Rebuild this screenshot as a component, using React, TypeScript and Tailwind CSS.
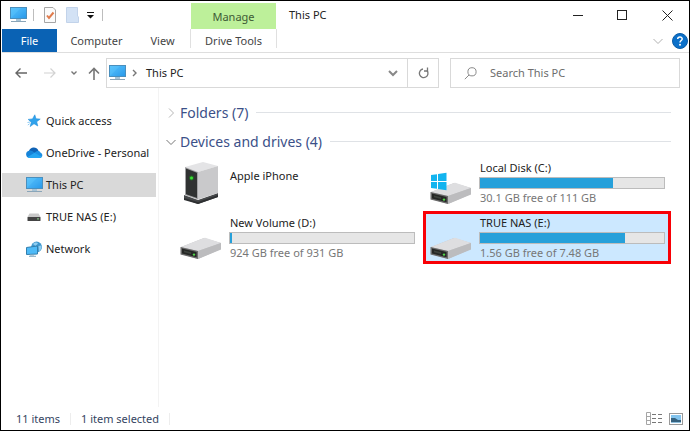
import React, { useState } from "react";
import clsx from "clsx";

type Drive = {
  name: string;
  kind: "tower" | "disk" | "system";
  detail?: string;
  used?: number;
};

const DRIVES: Drive[] = [
  { name: "Apple iPhone", kind: "tower" },
  { name: "Local Disk (C:)", kind: "system", detail: "30.1 GB free of 111 GB", used: 72.5 },
  { name: "New Volume (D:)", kind: "disk", detail: "924 GB free of 931 GB", used: 1 },
  { name: "TRUE NAS (E:)", kind: "disk", detail: "1.56 GB free of 7.48 GB", used: 79 },
];

function PcIcon() {
  return (
    <svg width="17" height="16" viewBox="0 0 17 16" className="shrink-0" aria-hidden="true">
      <defs>
        <linearGradient id="screen" x1="0" y1="0" x2="1" y2="1">
          <stop offset="0" stopColor="#5cc4fb" />
          <stop offset="0.5" stopColor="#4bb8f8" />
          <stop offset="1" stopColor="#2596e8" />
        </linearGradient>
      </defs>
      <rect x="0.5" y="0.5" width="16" height="11" fill="url(#screen)" stroke="#4a8fbd" />
      <path d="M1 11 L11 1 H16 V11 Z" fill="#2f9cea" opacity="0.3" />
      <path d="M6 12h5v2H6z" fill="#a8c4d6" />
      <path d="M1 14.5h15" stroke="#8aa5b8" />
    </svg>
  );
}

function StarIcon() {
  return (
    <svg width="14" height="14" viewBox="0 0 14 14" aria-hidden="true">
      <path d="M7.8 0.8 L9 4.8 L13.2 5.1 L9.7 7.8 L10.8 12 L7 9.7 L3.2 12.6 L4.3 8.2 L1.2 5.4 L5.5 4.9 Z" fill="#2fa2ec" stroke="#2790dc" strokeWidth="0.6" />
      <path d="M0.5 8.5 L3.2 8 M0.8 11 L2.6 9.8" stroke="#8ecbf3" />
    </svg>
  );
}

function CloudIcon() {
  return (
    <svg width="17" height="12" viewBox="0 0 17 12" className="shrink-0" aria-hidden="true">
      <path d="M3.2 3.6 A4.8 4.6 0 0 1 12.2 3.2 L13 5 L8 8 L2 6 Z" fill="#0f62b5" />
      <path d="M3 3.7 C5 3.3 6.6 4.3 8.4 5.6 L12 8.4 L3.6 11 A3.7 3.7 0 0 1 3 3.7 Z" fill="#1683d8" />
      <path d="M8.6 5.7 C10.6 3.3 13.9 3.6 14.6 5.7 C16.6 6.3 16.8 8.7 15.8 10 L11 8.8 Z" fill="#1c90e4" />
      <path d="M1.6 10 L8.6 5.7 L15.9 9.9 C15.2 10.8 14.4 11 13.6 11 H3.8 C2.8 11 2 10.6 1.6 10 Z" fill="#25a6f2" />
    </svg>
  );
}

function SmallDriveIcon() {
  return (
    <svg width="14" height="9" viewBox="0 0 14 9" aria-hidden="true">
      <path d="M2.5 0.5 H11.5 L13.5 4 H0.5 Z" fill="#c9c9c9" />
      <rect x="0.5" y="4" width="13" height="4" rx="0.5" fill="#444" />
      <rect x="10" y="5.4" width="2" height="1" fill="#8fd68f" />
    </svg>
  );
}

function NetworkIcon() {
  return (
    <svg width="17" height="16" viewBox="0 0 17 16" className="shrink-0" aria-hidden="true">
      <circle cx="10.6" cy="6" r="5.4" fill="#3f97cd" />
      <path d="M7 3 C9 0.8 11 1.2 12 2.4 L9.5 5 Z M12.5 5 L15.4 4.5 C16 7 15 9 13 10.4 Z" fill="#8fcdf0" />
      <path d="M0.5 6.5 L11.5 5 V13 L0.5 13.5 Z" fill="#4dbaf7" stroke="#327fae" />
      <path d="M4 14 H8 M3 15.3 H10" stroke="#7fa8c0" />
    </svg>
  );
}

function DiskIcon({ system = false }: { system?: boolean }) {
  return (
    <svg width="42" height="44" viewBox="0 -2 42 44" aria-hidden="true">
      <path d="M1 29 L24 20 L41 25 L41 31 L18 41 L1 36 Z" fill="#c4c4c6" />
      <path d="M1 29 L24 20 Q25 19.7 26 20 L41 25 L18 33 Z" fill="#dedee0" />
      <path d="M18 33 L41 25 V31.5 L18 41 Z" fill="#bcbcbe" />
      <path d="M0.5 29 L18 33 V41 L0.5 36.5 Z" fill="#6a6a6a" />
      <path d="M2 30.5 L16.6 34 V39.2 L2 35.5 Z" fill="#252725" />
      <path d="M4 32.5 L11 34.2 V36 L4 34.3 Z" fill="#3d423d" />
      <circle cx="14" cy="36.6" r="1.2" fill="#52d64a" />
      {system && (
        <g fill="#12b4ef">
          <path d="M1 12 L7 11.2 V18 H1 Z" />
          <path d="M8 11 L16.5 9.8 V18 H8 Z" />
          <path d="M1 19 H7 V25.8 L1 25 Z" />
          <path d="M8 19 H16.5 V27.2 L8 26 Z" />
        </g>
      )}
    </svg>
  );
}

function TowerIcon() {
  return (
    <svg width="42" height="44" viewBox="0 1 42 44" aria-hidden="true">
      <path d="M4 35 L18 40 L38 33 V37 L18 44 L4 39 Z" fill="#46484a" />
      <path d="M4 38 L18 42 L38 35 V37 L18 44 L4 40 Z" fill="#2e3032" />
      <path d="M5 7 L23 2 L38 6 L18 12 Z" fill="#e4e4e6" />
      <path d="M18 12 L38 6 V33 L18 39.5 Z" fill="#c9c9cb" />
      <path d="M5 7 L18 12 V39.5 L5 35 Z" fill="#a2a2a4" />
      <path d="M6 8.6 L17 12.8 V38 L6 34.2 Z" fill="#303232" />
      <circle cx="11.5" cy="18" r="2.4" fill="#206c20" />
      <circle cx="11.5" cy="18" r="1.5" fill="#3be036" />
    </svg>
  );
}

function Chevron({ dir, className }: { dir: "down" | "right"; className?: string }) {
  return (
    <svg width="10" height="10" viewBox="0 0 10 10" fill="none" stroke="currentColor" className={className} aria-hidden="true">
      <path d={dir === "down" ? "M0.5 3 L5 7.5 L9.5 3" : "M3 0.5 L7.5 5 L3 9.5"} />
    </svg>
  );
}

function TitleBar() {
  return (
    <header className="flex h-7 items-stretch">
      <div className="flex w-[189px] items-center pl-2">
        <PcIcon />
        <span className="ml-[6px] h-3 w-px bg-[#bdbdbd]" />
        <button aria-label="Properties" className="ml-[10px]">
          <svg width="12" height="16" viewBox="0 0 12 16" fill="none">
            <path d="M0.5 0.5 H9 L11.5 3 V15.5 H0.5 Z" fill="#fbfbfb" stroke="#a6a6a6" />
            <path d="M3 8.5 L5 11 L9.5 5.5" stroke="#e07b4c" strokeWidth="2" />
          </svg>
        </button>
        <button aria-label="New folder" className="ml-[10px]">
          <svg width="13" height="16" viewBox="0 0 13 16">
            <path d="M0.5 0.5 H11.5 V9 L12.5 10 V15.5 H0.5 Z" fill="#d3e2f5" stroke="#c2d3ea" />
          </svg>
        </button>
        <button aria-label="Customize Quick Access Toolbar" className="ml-2">
          <svg width="7" height="7" viewBox="0 0 7 7">
            <path d="M0 0 H7 V1 H0 Z M0 3 H7 L3.5 6.5 Z" fill="#111" />
          </svg>
        </button>
        <span className="ml-2 h-3 w-px bg-[#bdbdbd]" />
      </div>
      <div className="mt-[2px] flex w-[85px] items-center justify-center bg-[#bdf09a] pt-[2px] text-[#3d5a35]">Manage</div>
      <h1 className="ml-[13px] flex-1 self-center text-[#222]">This PC</h1>
      <div className="flex items-center text-[#222]">
        <button aria-label="Minimize" className="flex w-[44px] justify-center">
          <svg width="11" height="11" viewBox="0 0 11 11" stroke="currentColor"><path d="M0 5.5 H10" /></svg>
        </button>
        <button aria-label="Maximize" className="flex w-[45px] justify-center">
          <svg width="11" height="11" viewBox="0 0 11 11" stroke="currentColor" fill="none"><rect x="0.5" y="0.5" width="9" height="9" /></svg>
        </button>
        <button aria-label="Close" className="flex w-[44px] justify-center">
          <svg width="11" height="11" viewBox="0 0 11 11" stroke="currentColor"><path d="M0.5 0.5 L10.5 10.5 M10.5 0.5 L0.5 10.5" /></svg>
        </button>
      </div>
    </header>
  );
}

function Ribbon() {
  return (
    <div className="flex h-6 items-stretch border-b border-[#dedede] text-[#444]">
      <button className="w-[55px] bg-[#0a62b4] text-white">File</button>
      <button className="w-[79px]">Computer</button>
      <button className="w-[53px]">View</button>
      <button className="mb-1 ml-px w-[87px] border-x border-[#e0e0e0] pt-1">Drive Tools</button>
      <div className="flex flex-1 items-center justify-end pr-px">
        <button aria-label="Expand the Ribbon" className="text-[#b0b0b0]">
          <Chevron dir="down" />
        </button>
        <button aria-label="Help" className="ml-[9px]">
          <svg width="16" height="16" viewBox="0 0 16 16" fill="none">
            <circle cx="8" cy="8" r="7.5" fill="#0b70c9" stroke="#0b5ca6" />
            <path d="M5.7 6 C5.8 3.2 10.3 3.3 10.2 6 C10.1 7.5 8 7.7 8 9.6" stroke="#fff" strokeWidth="1.5" />
            <circle cx="8" cy="11.8" r="1" fill="#fff" />
          </svg>
        </button>
      </div>
    </div>
  );
}

function NavBar() {
  return (
    <div className="flex items-center pt-[5px] pr-[9px] pl-[13px]">
      <button aria-label="Back" className="text-[#666]">
        <svg width="12" height="12" viewBox="0 0 12 12" fill="none" stroke="currentColor" strokeWidth="1.4"><path d="M12 6 H1 M5.5 1.5 L1 6 L5.5 10.5" /></svg>
      </button>
      <button aria-label="Forward" disabled className="ml-[17px] text-[#d2d2d2]">
        <svg width="12" height="12" viewBox="0 0 12 12" fill="none" stroke="currentColor" strokeWidth="1.2"><path d="M0 6 H11 M6.5 1.5 L11 6 L6.5 10.5" /></svg>
      </button>
      <button aria-label="Recent locations" className="ml-[15px] text-[#777]">
        <svg width="6" height="6" viewBox="0 0 6 6" fill="none" stroke="currentColor" strokeWidth="1.4"><path d="M0.5 1.5 L3 4 L5.5 1.5" /></svg>
      </button>
      <button aria-label="Up" className="ml-[11px] text-[#777]">
        <svg width="12" height="13" viewBox="0 0 12 13" fill="none" stroke="currentColor" strokeWidth="1.6"><path d="M6 13 V1.5 M1 6.5 L6 1.5 L11 6.5" /></svg>
      </button>
      <div className="ml-[6px] flex h-[30px] min-w-0 flex-1 items-center border border-[#d9d9d9] pl-[2px]">
        <PcIcon />
        <svg width="5" height="8" viewBox="0 0 5 8" fill="none" stroke="#777" strokeWidth="1.4" className="ml-[6px]" aria-hidden="true"><path d="M1 1 L4 4 L1 7" /></svg>
        <a href="#this-pc" className="ml-[9px] flex-1 text-[#222]">This PC</a>
        <button aria-label="Previous locations" className="mr-[9px] text-[#888]">
          <svg width="10" height="8" viewBox="0 0 10 8" fill="none" stroke="currentColor" strokeWidth="2"><path d="M1 2 L5 6 L9 2" /></svg>
        </button>
        <button aria-label="Refresh" className="flex h-full w-[31px] items-center justify-center border-l border-[#d9d9d9] text-[#777]">
          <svg width="11" height="12" viewBox="0 0 11 12" fill="none" stroke="currentColor" strokeWidth="1.3">
            <path d="M9 3.5 A4.3 4.3 0 1 1 5 2" />
            <path d="M9.5 0.5 V4 H6" />
          </svg>
        </button>
      </div>
      <label className="ml-[11px] flex h-[30px] w-[230px] items-center border border-[#d9d9d9] pl-[13px]">
        <svg width="13" height="13" viewBox="0 0 13 13" fill="none" stroke="#8a8a8a" className="shrink-0" aria-hidden="true">
          <circle cx="8" cy="4.8" r="4.1" />
          <path d="M5 8 L0.8 12.2" />
        </svg>
        <input type="search" aria-label="Search This PC" placeholder="Search This PC" className="ml-[13px] min-w-0 flex-1 bg-transparent outline-none placeholder:text-[#6d6d6d]" />
      </label>
    </div>
  );
}

const PLACES = [
  { label: "Quick access", icon: <StarIcon /> },
  { label: "OneDrive - Personal", icon: <CloudIcon /> },
  { label: "This PC", icon: <PcIcon /> },
  { label: "TRUE NAS (E:)", icon: <SmallDriveIcon /> },
  { label: "Network", icon: <NetworkIcon /> },
];

function Sidebar() {
  return (
    <nav className="flex w-[157px] shrink-0 flex-col gap-2 border-r border-[#f3f3f3] pt-[21px] pr-[2px] text-[#222]">
      {PLACES.map((place) => (
        <a
          key={place.label}
          href="#place"
          className={clsx("flex h-6 items-center pl-6 whitespace-nowrap", place.label === "This PC" && "bg-[#d9d9d9]")}
        >
          <span className="flex w-4 shrink-0 justify-center">{place.icon}</span>
          <span className="ml-1">{place.label}</span>
        </a>
      ))}
    </nav>
  );
}

function GroupHeading({ title, open }: { title: string; open: boolean }) {
  return (
    <h2 className="flex h-[29px] items-center text-[14px] text-[#3b5088]">
      <button aria-expanded={open} className="flex items-center gap-1 whitespace-nowrap">
        <Chevron dir={open ? "down" : "right"} className={open ? "text-[#777]" : "text-[#b5b5b5]"} />
        {title}
      </button>
      <span className="ml-2 h-px flex-1 bg-[#dfe2e6]" />
    </h2>
  );
}

function DriveTile({ drive, selected, onSelect }: { drive: Drive; selected: boolean; onSelect: () => void }) {
  return (
    <button
      onClick={onSelect}
      aria-pressed={selected}
      className={clsx(
        "flex h-[53px] items-center border-[3px] pr-[3px] pl-1 text-left",
        selected ? "border-[#f80006] bg-[#cce8ff]" : "border-transparent"
      )}
    >
      <span className="w-[42px] shrink-0">
        {drive.kind === "tower" ? <TowerIcon /> : <DiskIcon system={drive.kind === "system"} />}
      </span>
      <span className="ml-[7px] block min-w-0 flex-1 leading-4 whitespace-nowrap">
        <span className={clsx("block pl-px text-[#222]", !drive.detail && "pb-[14px]")}>{drive.name}</span>
        {drive.detail && (
          <>
            <span className="my-px block h-3 border border-[#bcbcbc] bg-[#e6e6e6]">
              <span className="block h-full bg-[#26a0da]" style={{ width: `${drive.used}%` }} />
            </span>
            <span className="block pl-px text-[#777]">{drive.detail}</span>
          </>
        )}
      </span>
    </button>
  );
}

function StatusBar() {
  return (
    <footer className="flex h-[23px] items-center pr-[6px] pl-[14px] text-[#35445f]">
      <span>11 items</span>
      <span className="ml-[10px] h-3 w-px bg-[#ededed]" />
      <span className="ml-[10px]">1 item selected</span>
      <span className="ml-[10px] h-3 w-px bg-[#ededed]" />
      <button aria-label="Details view" className="ml-auto">
        <svg width="17" height="13" viewBox="0 0 17 13" fill="none">
          <path d="M0.5 0.5 H4.5 V12.5 H0.5 Z M0.5 4.5 H4.5 M0.5 8.5 H4.5" stroke="#a5a5a5" />
          <path d="M6 2.5 H10 M12 2.5 H16 M6 6.5 H10 M12 6.5 H16 M6 10.5 H10 M12 10.5 H16" stroke="#777" />
        </svg>
      </button>
      <button aria-label="Large icons view" className="ml-[6px]">
        <svg width="14" height="12" viewBox="0 0 14 12">
          <rect x="0.5" y="0.5" width="13" height="11" fill="#fff" stroke="#999" />
          <rect x="2" y="2" width="10" height="8" fill="#83c4ee" />
          <path d="M2 5 L6 5 L9 7 H12 V10 H2 Z" fill="#36627f" />
          <path d="M2 9 H12 V10 H2 Z" fill="#8ebfdd" />
        </svg>
      </button>
    </footer>
  );
}

export default function App() {
  const [selected, setSelected] = useState("TRUE NAS (E:)");

  return (
    <div className="flex min-h-screen flex-col border border-black bg-white pl-px font-['Noto_Sans','Open_Sans',sans-serif] text-[11px] leading-4">
      <TitleBar />
      <Ribbon />
      <NavBar />
      <div className="flex flex-1">
        <Sidebar />
        <main className="min-w-0 flex-1 pt-[10px] pr-[18px] pl-[7px]">
          <GroupHeading title="Folders (7)" open={false} />
          <GroupHeading title="Devices and drives (4)" open />
          <div className="ml-[7px] grid grid-cols-2 gap-[2px]">
            {DRIVES.map((drive) => (
              <DriveTile
                key={drive.name}
                drive={drive}
                selected={selected === drive.name}
                onSelect={() => setSelected(drive.name)}
              />
            ))}
          </div>
        </main>
      </div>
      <StatusBar />
    </div>
  );
}
